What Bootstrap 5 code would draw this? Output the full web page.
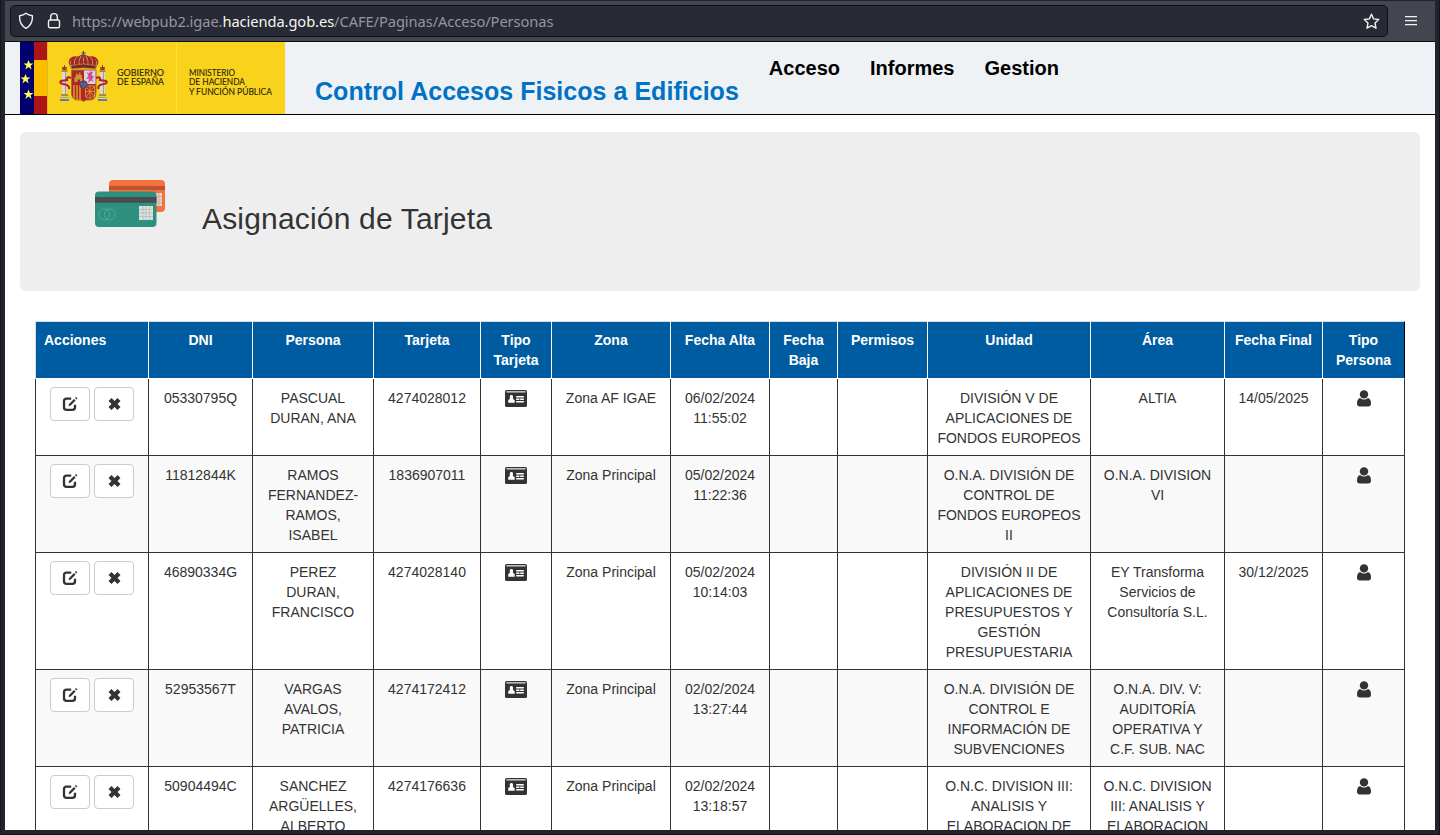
<!DOCTYPE html>
<html lang="es">
<head>
<meta charset="utf-8">
<title>Control Accesos Fisicos a Edificios</title>
<link rel="stylesheet" href="https://cdn.jsdelivr.net/npm/bootstrap@5.3.0/dist/css/bootstrap.min.css">
<style>
html,body{height:100%;overflow:hidden}
body{background:#21242d;color:#333;font-family:"Liberation Sans",Arial,sans-serif;font-size:14px;line-height:20px}
.window{height:835px;padding:1px 5px 5px;background:#21242d;box-shadow:inset 1px 0 #15171d,inset -1px -1px #111318}
.toolbar{height:41px;background:#43464e;border-bottom:1px solid #0d0e12;padding:4px 4px 4px 5px}
.urlbar{width:1378px;height:32px;background:#282a36;border:1px solid #0f1014;border-radius:5px;color:#96979d;font:14.67px/30px "Noto Sans",sans-serif;padding:0 7px}
.urlbar b{font-weight:400;color:#f8f8f2}
.url{margin-left:11px;white-space:pre;letter-spacing:-.07px}
.lock{margin-left:12px}
.menu{margin:10px 0 0 17px}
.viewport{height:788px;overflow:hidden;background:#fff}
.site-head{height:73px;background:#eef2f4;border-bottom:1px solid #000;padding-left:15px}
.brand-title{color:#0072c6;font-size:25px;line-height:28px;font-weight:700;letter-spacing:.03px;margin:35px 0 0 30px;white-space:nowrap}
.site-nav{margin:12px 0 0 30px;gap:30px;font-size:20px;line-height:28px;font-weight:700}
.site-nav a{color:#000;text-decoration:none}
.hero{margin:17px 15px 30px;height:159px;border-radius:6px;background:#eee;padding:48px 0 0 75px}
.hero h2{font-size:30px;line-height:33px;letter-spacing:.18px;margin:22px 0 0 37px;font-weight:400}
.grid{width:1370px;margin:0 0 0 30px;table-layout:fixed;border-collapse:separate;border-spacing:0;color:#333;text-align:center}
.grid>:not(caption)>*>*{padding:8px 0;border:0 solid #333;border-width:0 0 1px 1px;white-space:nowrap;vertical-align:top}
.grid>tbody>tr>*{padding:9px 0 7px}
.grid>tbody>tr>td:first-child{padding:8px 0}
.grid>thead>tr>th{background:#005ca1;color:#fff;border-color:#fff;border-top:1px solid #ddd;box-shadow:none}
.grid>thead>tr>th:first-child{text-align:left;padding-left:8px;border-left-color:#ddd}
.grid>*>tr>*:last-child{border-right:1px solid #333!important}
.grid>thead>tr>th:last-child{border-right-color:#000!important}
.grid>tbody>tr:nth-child(even)>td{background:#f9f9f9;box-shadow:none}
.grid .btn{width:40px;height:34px;padding:0;background:#fff;border:1px solid #ccc;border-radius:4px;color:#333}
.grid svg{display:block;margin:0 auto}
.grid .ic-card,.grid .ic-user{margin-top:2px}
</style>
</head>
<body>
<svg width="0" height="0" class="position-absolute">
  <symbol id="edit" viewBox="0 0 16 16"><path d="M9.2 2.6H4.6Q2 2.6 2 5.2V11.2Q2 13.8 4.6 13.8H10.4Q13 13.8 13 11.2V8.8" fill="none" stroke="#333" stroke-width="2.3"/><path d="M6.6 10.3 7 7.9 12 3 13.6 4.6 8.7 9.6ZM12.9 2 13.9 1.1 15.5 2.6 14.5 3.6Z" fill="#333"/></symbol>
  <symbol id="close" viewBox="0 0 12 12"><path d="M3 0 6 3 9 0 12 3 9 6 12 9 9 12 6 9 3 12 0 9 3 6 0 3Z" fill="#333"/></symbol>
  <symbol id="idcard" viewBox="0 0 22 17"><rect width="22" height="17" rx="1.6" fill="#333"/><path d="M1.4 1.2H20.6V2.5H1.4Z" fill="#ddd"/><path d="M3.2 12.7V10.5Q3.5 9.2 5 9L4.8 8.4V6.2Q5 5.1 6.4 5.1T8 6.2V8.4L7.8 9Q9.5 9.3 9.7 10.5V12.7ZM11.2 6.1H18.8V7.5H11.2ZM11.2 8.6H14.4V10H11.2ZM15.2 8.6H18.8V10H15.2ZM11.2 11.1H18.8V12.5H11.2Z" fill="#fff"/></symbol>
  <symbol id="user" viewBox="0 0 14 17"><circle cx="7" cy="4.4" r="4.2" fill="#333"/><path d="M3 8Q7 11 11 8 14 8.8 14 13.5 14 16.5 11.3 16.5H2.7Q0 16.5 0 13.5 0 8.8 3 8Z" fill="#333"/></symbol>
  <symbol id="star" viewBox="-6 -6 12 12"><path d="M0-5.4 1.5-1.6 5.4-1.6 2.2 .8 3.4 4.8 0 2.3-3.4 4.8-2.2 .8-5.4-1.6-1.5-1.6Z" fill="#ff5"/></symbol>
</svg>
<div class="window">
  <div class="toolbar d-flex">
    <div class="urlbar d-flex align-items-center">
      <svg width="17" height="18" viewBox="0 0 17 18" fill="none" stroke="#f2f2ee" stroke-width="1.4"><path d="M8 1.3Q10.5 3.3 14.4 3.8 15 12.5 8 16.3 1 12.5 1.6 3.8 5.5 3.3 8 1.3Z" stroke-linejoin="round"/></svg>
      <svg class="lock" width="14" height="18" viewBox="0 0 14 18" fill="none" stroke="#f2f2ee" stroke-width="1.4"><rect x="1.5" y="8" width="11" height="7.7" rx="1.5"/><path d="M3.7 8V4.5Q3.7 1.6 7 1.6T10.3 4.5V8"/></svg>
      <span class="url">https://webpub2.igae.<b>hacienda.gob.es</b>/CAFE/Paginas/Acceso/Personas</span>
      <svg class="ms-auto" width="17" height="17" viewBox="0 0 17 17" fill="none" stroke="#f2f2ee" stroke-width="1.4" stroke-linejoin="round"><path d="M8.5 1.2 10.6 5.9 15.7 6.5 12 10 13 15.2 8.5 12.7 4 15.2 5 10 1.3 6.5 6.4 5.9Z"/></svg>
    </div>
    <svg class="menu" width="12" height="12" viewBox="0 0 12 12" fill="#f2f2ee"><path d="M0 1H12V2.3H0ZM0 5H12V6.3H0ZM0 9H12V10.3H0Z"/></svg>
  </div>
  <main class="viewport">
    <header class="site-head d-flex align-items-start">
      <svg class="flex-shrink-0" width="265" height="72" viewBox="0 0 265 72">
        <path fill="#f8d21b" d="M0 0H265V72H0Z"/><path fill="#020070" d="M0 0H14V72H0Z"/><path fill="#ad1519" d="M14 0H27.5V72H14Z"/><path fill="#fabd00" d="M14 18H27.5V54H14Z"/>
        <path d="M27.5 0V72" stroke="#e9b717"/><path d="M156.5 0V72" stroke="#ffe033"/>
        <use href="#star" x="3" y="17.5" width="11" height="11"/><use href="#star" x="0" y="31.5" width="11" height="11"/><use href="#star" x="3" y="47" width="11" height="11"/>
        <g>
          <path d="M51 26Q47 20 50 16.5 53 13.5 58 14.5L63 12 69 14.5Q74 13.5 77 16.5 80 20 76 26Z" fill="#a8202d"/>
          <path d="M51 25Q49 20 52 17.5M55 25Q53 18 57 15M59 25Q58 18 61 14M63.5 25V12M68 25Q69 18 66 14M72 25Q74 18 70 15M76 25Q78 20 75 17.5" fill="none" stroke="#c9a03b" stroke-width="1"/>
          <path d="M50.5 18Q56 20 63.5 20T76.5 18" fill="none" stroke="#6a4329" stroke-width="1.2" stroke-dasharray="1.5 1"/>
          <path d="M63.5 9V14M61.5 11H65.5" stroke="#57452a" stroke-width="1.1"/><circle cx="63.5" cy="14" r="1.5" fill="#385f83"/>
          <path d="M51 23.5Q63 20.5 76 23.5L75.5 27Q63 25 51.5 27Z" fill="#7d2428" stroke="#b88b2b" stroke-width=".8"/>
          <path d="M51.5 28H76V50Q76 58 70 58H66L63.5 59.5 61 58H57Q51.5 58 51.5 50Z" fill="#b4222c" stroke="#a2752a"/>
          <path d="M64 28.5H75.5V42H64Z" fill="#dcd4df"/>
          <path d="M66.5 30 69 31.5 70 29.5 73 30 71.5 32.5 74 35 72 37 74 40 71 38.5 68 41 69 36.5 66 37 68.5 34Z" fill="#d64996"/>
          <path d="M54.5 40V35H56V31.5H57.5V33H59V30.5H60.5V33H62V36H62.5V40H60V37.5H57.5V40Z" fill="#c69a26"/>
          <path d="M54 43V57M57 43V58M60 43V58" stroke="#d7a923" stroke-width="1.4"/>
          <g fill="none" stroke="#d1a02a" stroke-width=".9"><path d="M65.5 44H74.5V54L71 56H67L65.5 54ZM65.5 44 74.5 55M74.5 44 66 55M70 44V56M65.5 49.5H74.5"/></g>
          <circle cx="63.5" cy="42.5" r="3.8" fill="#225aa2" stroke="#a82b37"/><path d="M62 41.5V43M65 41.5V43M63.5 44V45" stroke="#cbb44a"/>
          <path d="M42 30H47V53H42ZM80 30H85V53H80Z" fill="#d8d8d2"/><path d="M45.5 30V53M83.5 30V53" stroke="#9a9c9b"/>
          <path d="M41.5 28H47.5V30H41.5ZM79.5 28H85.5V30H79.5ZM41 52H48V54H41ZM79 52H86V54H79Z" fill="#b38b25"/>
          <path d="M42.5 28 42 25H47L46.5 28ZM80.5 28 80 25H85L84.5 28Z" fill="#a4373a"/><path d="M44.5 23V26M82.5 23V26" stroke="#66552a"/>
          <path d="M40 55.5H49V59H40ZM78 55.5H87V59H78Z" fill="#687d8b"/><path d="M40 56.5H49M78 56.5H87" stroke="#d4d6c6"/>
          <path d="M51 36Q46 34 47 38L41 39Q39 41 43 42 50 43 49 47M76 36Q81 34 80 38L86 39Q88 41 84 42 77 43 78.5 47" fill="none" stroke="#b4202b" stroke-width="2.2"/>
        </g>
        <g font-family="Lato, sans-serif" font-size="9" fill="#27240f" stroke="#27240f" stroke-width=".1"><text x="97" y="34" textLength="47" lengthAdjust="spacingAndGlyphs">GOBIERNO</text><text x="97" y="43.3" textLength="47" lengthAdjust="spacingAndGlyphs">DE ESPAÑA</text><text x="169" y="34" textLength="46" lengthAdjust="spacingAndGlyphs">MINISTERIO</text><text x="169" y="43.3" textLength="56" lengthAdjust="spacingAndGlyphs">DE HACIENDA</text><text x="169" y="52.6" textLength="83" lengthAdjust="spacingAndGlyphs">Y FUNCIÓN PÚBLICA</text></g>
      </svg>
      <div class="brand-title">Control Accesos Fisicos a Edificios</div>
      <nav class="site-nav d-flex"><a href="#">Acceso</a><a href="#">Informes</a><a href="#">Gestion</a></nav>
    </header>
    <section class="hero d-flex align-items-start">
      <svg width="70" height="47" viewBox="0 0 70 47"><rect x="14" width="56" height="32" rx="4" fill="#f57338"/><path fill="#bd5336" d="M14 6H70V10H14Z"/><path fill="#e3d5cf" d="M60 13H67V26H60Z"/><path d="M60 16.5H67M60 20H67M60 23H67M64 13V26" stroke="#c9a597" stroke-width=".8"/><rect y="11.5" width="61.5" height="35.5" rx="4" fill="#2e917f"/><path fill="#4b4c50" d="M0 17H61.5V22.7H0Z"/><path fill="#e1dfdc" d="M44 26H58V40H44Z"/><path d="M44 29.5H58M44 33H58M44 36.5H58M48 26V40M51 26V40M54.5 26V40" stroke="#a9bcb4" stroke-width=".7"/><g fill="none" stroke="#60aa9c" stroke-width=".8"><circle cx="9.3" cy="34.5" r="5.5"/><circle cx="14.8" cy="34.5" r="5.5"/></g></svg>
      <h2>Asignación de Tarjeta</h2>
    </section>
    <table class="table grid">
      <colgroup><col style="width:113px"><col style="width:104px"><col style="width:121px"><col style="width:107px"><col style="width:71px"><col style="width:119px"><col style="width:99px"><col style="width:68px"><col style="width:90px"><col style="width:163px"><col style="width:134px"><col style="width:98px"><col style="width:83px"></colgroup>
      <thead><tr><th>Acciones</th><th>DNI</th><th>Persona</th><th>Tarjeta</th><th>Tipo<br>Tarjeta</th><th>Zona</th><th>Fecha Alta</th><th>Fecha<br>Baja</th><th>Permisos</th><th>Unidad</th><th>Área</th><th>Fecha Final</th><th>Tipo<br>Persona</th></tr></thead>
      <tbody>
        <tr><td><div class="d-flex justify-content-center gap-1"><button class="btn"><svg width="16" height="16"><use href="#edit"/></svg></button><button class="btn"><svg width="13" height="12"><use href="#close"/></svg></button></div></td><td>05330795Q</td><td>PASCUAL<br>DURAN, ANA</td><td>4274028012</td><td><svg class="ic-card" width="22" height="17"><use href="#idcard"/></svg></td><td>Zona AF IGAE</td><td>06/02/2024<br>11:55:02</td><td></td><td></td><td>DIVISIÓN V DE<br>APLICACIONES DE<br>FONDOS EUROPEOS</td><td>ALTIA</td><td>14/05/2025</td><td><svg class="ic-user" width="14" height="17"><use href="#user"/></svg></td></tr>
        <tr><td><div class="d-flex justify-content-center gap-1"><button class="btn"><svg width="16" height="16"><use href="#edit"/></svg></button><button class="btn"><svg width="13" height="12"><use href="#close"/></svg></button></div></td><td>11812844K</td><td>RAMOS<br>FERNANDEZ-<br>RAMOS,<br>ISABEL</td><td>1836907011</td><td><svg class="ic-card" width="22" height="17"><use href="#idcard"/></svg></td><td>Zona Principal</td><td>05/02/2024<br>11:22:36</td><td></td><td></td><td>O.N.A. DIVISIÓN DE<br>CONTROL DE<br>FONDOS EUROPEOS<br>II</td><td>O.N.A. DIVISION<br>VI</td><td></td><td><svg class="ic-user" width="14" height="17"><use href="#user"/></svg></td></tr>
        <tr><td><div class="d-flex justify-content-center gap-1"><button class="btn"><svg width="16" height="16"><use href="#edit"/></svg></button><button class="btn"><svg width="13" height="12"><use href="#close"/></svg></button></div></td><td>46890334G</td><td>PEREZ<br>DURAN,<br>FRANCISCO</td><td>4274028140</td><td><svg class="ic-card" width="22" height="17"><use href="#idcard"/></svg></td><td>Zona Principal</td><td>05/02/2024<br>10:14:03</td><td></td><td></td><td>DIVISIÓN II DE<br>APLICACIONES DE<br>PRESUPUESTOS Y<br>GESTIÓN<br>PRESUPUESTARIA</td><td>EY Transforma<br>Servicios de<br>Consultoría S.L.</td><td>30/12/2025</td><td><svg class="ic-user" width="14" height="17"><use href="#user"/></svg></td></tr>
        <tr><td><div class="d-flex justify-content-center gap-1"><button class="btn"><svg width="16" height="16"><use href="#edit"/></svg></button><button class="btn"><svg width="13" height="12"><use href="#close"/></svg></button></div></td><td>52953567T</td><td>VARGAS<br>AVALOS,<br>PATRICIA</td><td>4274172412</td><td><svg class="ic-card" width="22" height="17"><use href="#idcard"/></svg></td><td>Zona Principal</td><td>02/02/2024<br>13:27:44</td><td></td><td></td><td>O.N.A. DIVISIÓN DE<br>CONTROL E<br>INFORMACIÓN DE<br>SUBVENCIONES</td><td>O.N.A. DIV. V:<br>AUDITORÍA<br>OPERATIVA Y<br>C.F. SUB. NAC</td><td></td><td><svg class="ic-user" width="14" height="17"><use href="#user"/></svg></td></tr>
        <tr><td><div class="d-flex justify-content-center gap-1"><button class="btn"><svg width="16" height="16"><use href="#edit"/></svg></button><button class="btn"><svg width="13" height="12"><use href="#close"/></svg></button></div></td><td>50904494C</td><td>SANCHEZ<br>ARGÜELLES,<br>ALBERTO</td><td>4274176636</td><td><svg class="ic-card" width="22" height="17"><use href="#idcard"/></svg></td><td>Zona Principal</td><td>02/02/2024<br>13:18:57</td><td></td><td></td><td>O.N.C. DIVISION III:<br>ANALISIS Y<br>ELABORACION DE</td><td>O.N.C. DIVISION<br>III: ANALISIS Y<br>ELABORACION</td><td></td><td><svg class="ic-user" width="14" height="17"><use href="#user"/></svg></td></tr>
      </tbody>
    </table>
  </main>
</div>
<script src="https://cdn.jsdelivr.net/npm/bootstrap@5.3.0/dist/js/bootstrap.bundle.min.js"></script>
</body>
</html>
